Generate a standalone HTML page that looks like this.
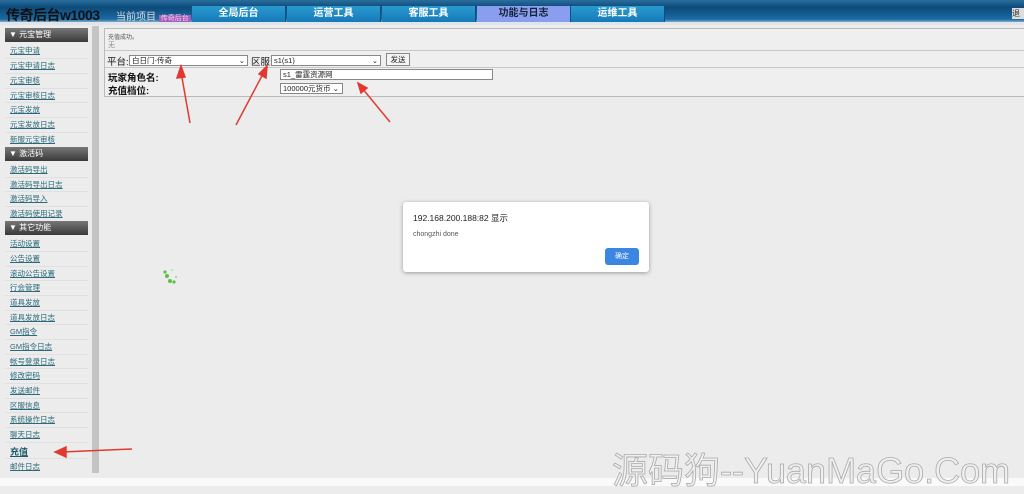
<!DOCTYPE html>
<html><head><meta charset="utf-8"><style>
*{margin:0;padding:0;box-sizing:border-box}
body{width:1024px;height:486px;overflow:hidden;background:#ececec;font-family:"Liberation Sans","Noto Sans CJK SC",sans-serif;position:relative}
.hdr{position:absolute;left:0;top:0;width:1024px;height:24px;background:linear-gradient(#2a6f9e 0,#0c4a7a 30%,#1a6aa3 80%,#d0d8e0 100%)}
.hdr .bar{position:absolute;left:0;top:22px;width:1024px;height:3px;background:#dfe5ea}
.logo{position:absolute;left:6px;top:5px;font-size:14px;font-weight:bold;color:#111;letter-spacing:-0.5px}
.cur{position:absolute;left:116px;top:8px;font-size:10px;color:#ddd;white-space:nowrap}
.cur span{background:#a060c0;color:#fcd;font-size:7px;padding:0 2px}
.tab{position:absolute;top:6px;height:16px;width:94px;background:linear-gradient(#2a9ad0,#157ab8);color:#fff;font-size:10px;font-weight:bold;text-align:center;line-height:16px;border-right:1px solid #0b5080}
.tab.on{background:#8a9ef0;color:#123}
.out{position:absolute;right:0;top:8px;width:12px;height:11px;background:#ddd;font-size:8px;color:#333;overflow:hidden}
.side{position:absolute;left:5px;top:28px;width:83px}
.sh{position:absolute;left:0;width:83px;height:14px;background:linear-gradient(#777,#3a3a3a);color:#fff;font-size:8px;line-height:14px;padding-left:4px}
.si{position:absolute;left:5px;font-size:7.5px;color:#2a6a7a;text-decoration:underline;white-space:nowrap}
.sl{position:absolute;left:0;width:83px;border-top:1px solid #e0e0e0}
.scroll{position:absolute;left:92px;top:26px;width:7px;height:447px;background:#c4c4c4}
.panel{position:absolute;left:104px;top:28px;width:920px;height:69px;border:1px solid #bbb;border-right:none;background:#efefef}
.panel .r{position:absolute;left:0;width:920px;border-top:1px solid #c8c8c8}
.sel{position:absolute;height:11px;border:1px solid #888;background:#fff;font-size:7.5px;line-height:9px;padding-left:2px;color:#222}
.lbl{position:absolute;font-size:9.5px;color:#111}
.dlg{position:absolute;left:403px;top:202px;width:246px;height:70px;background:#fff;border-radius:3px;box-shadow:0 1px 4px rgba(0,0,0,.35)}
.btn{position:absolute;left:202px;top:46px;width:34px;height:17px;background:#3b86e0;border-radius:3px;color:#fff;font-size:7px;text-align:center;line-height:17px}
.wm{position:absolute;left:612px;top:442px;font-size:36px;color:#f0f0f0;-webkit-text-stroke:0.8px #aaa;white-space:nowrap;font-family:"Liberation Sans","Noto Sans CJK SC",sans-serif}
.bot{position:absolute;left:0;top:478px;width:1024px;height:8px;background:#fafafa}
</style></head><body>
<div class="hdr"><div class="bar"></div></div>
<div class="logo">传奇后台w1003</div>
<div class="cur">当前项目 <span>传奇后台</span></div>
<div class="tab" style="left:192px">全局后台</div>
<div class="tab" style="left:287px">运营工具</div>
<div class="tab" style="left:382px">客服工具</div>
<div class="tab on" style="left:477px">功能与日志</div>
<div class="tab" style="left:571px">运维工具</div>
<div class="out">退出</div>

<div class="side">
<div class="sh" style="top:0">▼ 元宝管理</div>
<div class="si" style="top:17px">元宝申请</div><div class="sl" style="top:30px"></div>
<div class="si" style="top:32px">元宝申请日志</div><div class="sl" style="top:45px"></div>
<div class="si" style="top:47px">元宝审核</div><div class="sl" style="top:60px"></div>
<div class="si" style="top:62px">元宝审核日志</div><div class="sl" style="top:74px"></div>
<div class="si" style="top:76px">元宝发放</div><div class="sl" style="top:89px"></div>
<div class="si" style="top:91px">元宝发放日志</div><div class="sl" style="top:104px"></div>
<div class="si" style="top:106px">新服元宝审核</div>
<div class="sh" style="top:119px">▼ 激活码</div>
<div class="si" style="top:136px">激活码导出</div><div class="sl" style="top:149px"></div>
<div class="si" style="top:151px">激活码导出日志</div><div class="sl" style="top:163px"></div>
<div class="si" style="top:165px">激活码导入</div><div class="sl" style="top:178px"></div>
<div class="si" style="top:180px">激活码使用记录</div>
<div class="sh" style="top:193px">▼ 其它功能</div>
<div class="si" style="top:210px">活动设置</div><div class="sl" style="top:223px"></div>
<div class="si" style="top:225px">公告设置</div><div class="sl" style="top:238px"></div>
<div class="si" style="top:240px">滚动公告设置</div><div class="sl" style="top:252px"></div>
<div class="si" style="top:254px">行会管理</div><div class="sl" style="top:267px"></div>
<div class="si" style="top:269px">道具发放</div><div class="sl" style="top:282px"></div>
<div class="si" style="top:284px">道具发放日志</div><div class="sl" style="top:296px"></div>
<div class="si" style="top:298px">GM指令</div><div class="sl" style="top:311px"></div>
<div class="si" style="top:313px">GM指令日志</div><div class="sl" style="top:326px"></div>
<div class="si" style="top:328px">帐号登录日志</div><div class="sl" style="top:340px"></div>
<div class="si" style="top:342px">修改密码</div><div class="sl" style="top:355px"></div>
<div class="si" style="top:357px">发送邮件</div><div class="sl" style="top:370px"></div>
<div class="si" style="top:372px">区服信息</div><div class="sl" style="top:384px"></div>
<div class="si" style="top:386px">系统操作日志</div><div class="sl" style="top:399px"></div>
<div class="si" style="top:401px">聊天日志</div><div class="sl" style="top:414px"></div>
<div class="si" style="top:417px;font-size:9px;font-weight:bold;color:#1a5a6a">充值</div><div class="sl" style="top:430px"></div>
<div class="si" style="top:433px">邮件日志</div>
</div>
<div class="scroll"></div>

<div class="panel">
<div style="position:absolute;left:3px;top:3px;font-size:6px;color:#555">充值成功。</div>
<div style="position:absolute;left:3px;top:11px;font-size:7px;color:#888">无</div>
<div class="r" style="top:21px"></div>
<div class="r" style="top:38px"></div>
<div class="lbl" style="left:2px;top:25px">平台:</div>
<div class="sel" style="left:24px;top:26px;width:119px">白日门-传奇<span style="float:right;padding-right:2px">⌄</span></div>
<div class="lbl" style="left:146px;top:25px">区服:</div>
<div class="sel" style="left:166px;top:26px;width:110px">s1(s1)<span style="float:right;padding-right:2px">⌄</span></div>
<div class="sel" style="left:281px;top:24px;width:24px;height:13px;background:#f4f4f4;text-align:center;padding:0;line-height:11px">发送</div>
<div class="lbl" style="left:3px;top:41px;font-weight:bold">玩家角色名:</div>
<div class="sel" style="left:175px;top:40px;width:213px">s1_雷霆资源网</div>
<div class="lbl" style="left:3px;top:54px;font-weight:bold">充值档位:</div>
<div class="sel" style="left:175px;top:54px;width:63px">100000元货币 ⌄</div>
</div>

<svg style="position:absolute;left:0;top:0" width="1024" height="486">
<g stroke="#e03a30" stroke-width="1.5" fill="#e03a30">
<line x1="190" y1="123" x2="181" y2="72"/><polygon points="181,66 177,78 185,77"/>
<line x1="236" y1="125" x2="264" y2="72"/><polygon points="267,66 259,74 266,78"/>
<line x1="390" y1="122" x2="362" y2="88"/><polygon points="358,83 361,93 367,88"/>
<line x1="132" y1="449" x2="62" y2="452"/><polygon points="55,452 66,447 66,457"/>
</g>
<g fill="#5cc040"><circle cx="167" cy="276" r="2"/><circle cx="170" cy="281" r="2"/><circle cx="174" cy="282" r="1.6"/><circle cx="165" cy="272" r="1.6"/><circle cx="176" cy="277" r="1" fill="#9c9"/><circle cx="172" cy="270" r="0.8" fill="#9c9"/></g>
</svg>

<div class="dlg">
<div style="position:absolute;left:10px;top:10px;font-size:8.5px;color:#222">192.168.200.188:82 显示</div>
<div style="position:absolute;left:10px;top:29px;font-size:7px;color:#555">chongzhi done</div>
<div class="btn">确定</div>
</div>
<div class="bot"></div>
<div class="wm">源码狗--YuanMaGo.Com</div>
</body></html>
